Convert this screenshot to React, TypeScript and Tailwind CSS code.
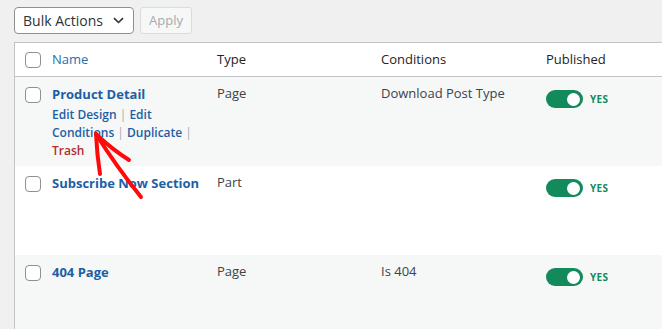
import React from "react";

const Checkbox = () => (
  <div className="w-4 h-4 rounded-[4px] border border-[#8c8f94] bg-white" />
);

const Toggle = () => (
  <div className="flex items-center gap-[7px]">
    <div className="w-[37px] h-[18px] rounded-full bg-[#138a5c] flex items-center justify-end pr-[3px]">
      <div className="w-[13px] h-[13px] rounded-full bg-white" />
    </div>
    <span className="text-[10px] font-bold text-[#138a5c] tracking-[0.3px]">YES</span>
  </div>
);

const Sep = () => <span className="text-[#a7aaad] font-normal"> | </span>;

type Row = {
  title: string;
  type: string;
  cond: string;
  bg: string;
  actions?: boolean;
};

const rows: Row[] = [
  { title: "Product Detail", type: "Page", cond: "Download Post Type", bg: "bg-[#f6f7f7]", actions: true },
  { title: "Subscribe Now Section", type: "Part", cond: "", bg: "bg-white" },
  { title: "404 Page", type: "Page", cond: "Is 404", bg: "bg-[#f6f7f7]" },
];

export default function App() {
  return (
    <div
      className="relative w-[662px] h-[329px] overflow-hidden bg-[#f0f0f1]"
      style={{ fontFamily: '"Open Sans", "Noto Sans", sans-serif' }}
    >
      <div className="flex items-center gap-[6px] pl-[14px] pt-[7px]">
        <div className="w-[120px] h-[27px] rounded-[4px] border border-[#8c8f94] bg-white flex items-center justify-between pl-[8px] pr-[9px] text-[14px] text-[#2c3338]">
          <span>Bulk Actions</span>
          <svg width="11" height="7" viewBox="0 0 11 7" fill="none">
            <path d="M1 1.2 L5.5 5.5 L10 1.2" stroke="#2c3338" strokeWidth="1.6" />
          </svg>
        </div>
        <div className="w-[52px] h-[27px] rounded-[3px] border border-[#dcdcde] bg-[#f6f7f7] flex items-center justify-center text-[13px] text-[#a7aaad]">
          Apply
        </div>
      </div>

      <div className="ml-[14px] mt-[8px] w-[700px] border-l border-t border-[#c3c4c7]">
        <div className="flex items-center h-[34px] border-b border-[#c3c4c7] bg-white text-[13px] text-[#1d2327]">
          <div className="w-[37px] pl-[10px] flex">
            <Checkbox />
          </div>
          <div className="w-[165px] text-[#2271b1]">Name</div>
          <div className="w-[164px]">Type</div>
          <div className="w-[165px]">Conditions</div>
          <div>Published</div>
        </div>
        {rows.map((r) => (
          <div key={r.title} className={`flex h-[89px] ${r.bg} text-[13px] text-[#3c434a]`}>
            <div className="w-[37px] pl-[10px] pt-[10px]">
              <Checkbox />
            </div>
            <div className="w-[165px] pt-[7px]">
              <div className="font-bold text-[#1c5fa6] leading-[20px]">{r.title}</div>
              {r.actions && (
                <div className="mt-[2px] text-[12px] font-semibold leading-[18px] text-[#1c5fa6]">
                  <div>
                    Edit Design<Sep />Edit
                  </div>
                  <div>
                    Conditions<Sep />Duplicate<Sep />
                  </div>
                  <div className="text-[#b32d2e]">Trash</div>
                </div>
              )}
            </div>
            <div className="w-[164px] pt-[6px] leading-[20px]">{r.type}</div>
            <div className="w-[165px] pt-[6px] leading-[20px]">{r.cond}</div>
            <div className="pt-[13px]">
              <Toggle />
            </div>
          </div>
        ))}
      </div>

      <svg
        className="absolute left-0 top-0 pointer-events-none"
        width="662"
        height="329"
        viewBox="0 0 662 329"
        fill="none"
      >
        <g stroke="#ff0a0a" strokeWidth="4" strokeLinecap="round" strokeLinejoin="round">
          <path d="M96 134 Q 97 155 100 174" />
          <path d="M96 134 Q 116 166 141 197" />
          <path d="M97 135 Q 113 150 129 160" />
        </g>
      </svg>
    </div>
  );
}
